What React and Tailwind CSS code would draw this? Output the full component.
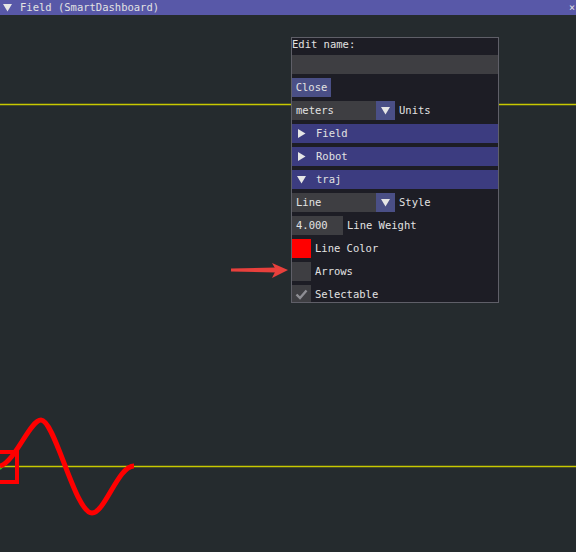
import React from 'react'

const FONT = { fontFamily: '"DejaVu Sans Mono", "Liberation Mono", monospace' }

function Tri({ down, className = '' }) {
  return (
    <svg width="9" height="9" viewBox="0 0 9 9" className={className}>
      {down ? <polygon points="0,1 9,1 4.5,8.5" fill="#e6e6e6" /> : <polygon points="1,0 8.5,4.5 1,9" fill="#e6e6e6" />}
    </svg>
  )
}

function Combo({ value, label }) {
  return (
    <div className="flex items-center h-[19px]">
      <div className="w-[84px] h-full bg-[#3e3e42] pl-[4px] flex items-center">{value}</div>
      <div className="w-[19px] h-full bg-[#4a4f86] flex items-center justify-center">
        <Tri down />
      </div>
      <span className="ml-[4px]">{label}</span>
    </div>
  )
}

function Header({ label, open }) {
  return (
    <div className="h-[19px] bg-[#3c3c80] flex items-center">
      <Tri down={open} className="ml-[5px]" />
      <span className="ml-[10px]">{label}</span>
    </div>
  )
}

export default function App() {
  return (
    <div className="relative w-[576px] h-[552px] bg-[#252b2e] overflow-hidden text-[#e2e2e2] text-[10.5px]" style={FONT}>
      {/* title bar */}
      <div className="h-[15px] bg-[#5858a8] flex items-center">
        <Tri down className="ml-[3px]" />
        <span className="ml-[8px] leading-none">Field (SmartDashboard)</span>
        <span className="ml-auto mr-[1px] text-[10px] leading-none">×</span>
      </div>

      {/* field canvas */}
      <svg width="576" height="537" className="absolute left-0 top-[15px]">
        <line x1="0" y1="89.5" x2="576" y2="89.5" stroke="#c8c800" strokeWidth="1.3" />
        <line x1="0" y1="451.5" x2="576" y2="451.5" stroke="#c8c800" strokeWidth="1.3" />
        <line x1="0" y1="454" x2="8" y2="446" stroke="#22dd22" strokeWidth="2" />
        <path d="M0 451 C 15 447, 30 405, 41 405 C 55 405, 75 498, 92 498 C 105 498, 118 451, 134 451" fill="none" stroke="#ff0000" strokeWidth="5" />
        <rect x="-10" y="437" width="27" height="30" fill="none" stroke="#ff0000" strokeWidth="4" />
        {/* red arrow */}
        <polygon points="231,253.5 276,252.5 276,257.5 231,256.5" fill="#e8403c" />
        <polygon points="272,248 288,255 272,263 276,255" fill="#e8403c" />
      </svg>

      {/* popup */}
      <div className="absolute left-[291px] top-[37px] w-[208px] h-[266px] border border-[#5f5f68] bg-[#1d1d25] overflow-hidden">
        <div className="flex flex-col gap-[4px]">
          <div className="h-[13px] flex items-center">Edit name:</div>
          <div className="h-[19px] bg-[#3e3e42]" />
          <div className="h-[19px] w-[39px] bg-[#4a4f86] flex items-center justify-center">Close</div>
          <Combo value="meters" label="Units" />
          <Header label="Field" />
          <Header label="Robot" />
          <Header label="traj" open />
          <Combo value="Line" label="Style" />
          <div className="flex items-center h-[19px]">
            <div className="w-[51px] h-full bg-[#3e3e42] pl-[4px] flex items-center">4.000</div>
            <span className="ml-[4px]">Line Weight</span>
          </div>
          <div className="flex items-center h-[19px]">
            <div className="w-[19px] h-full bg-[#ff0000]" />
            <span className="ml-[4px]">Line Color</span>
          </div>
          <div className="flex items-center h-[19px]">
            <div className="w-[19px] h-full bg-[#3e3e42]" />
            <span className="ml-[4px]">Arrows</span>
          </div>
          <div className="flex items-center h-[19px]">
            <div className="w-[19px] h-full bg-[#3e3e42] flex items-center justify-center">
              <svg width="13" height="11" viewBox="0 0 13 11">
                <polyline points="1.5,5.5 5,9 11.5,1.5" fill="none" stroke="#8e8e94" strokeWidth="2.4" />
              </svg>
            </div>
            <span className="ml-[4px]">Selectable</span>
          </div>
        </div>
      </div>
    </div>
  )
}
